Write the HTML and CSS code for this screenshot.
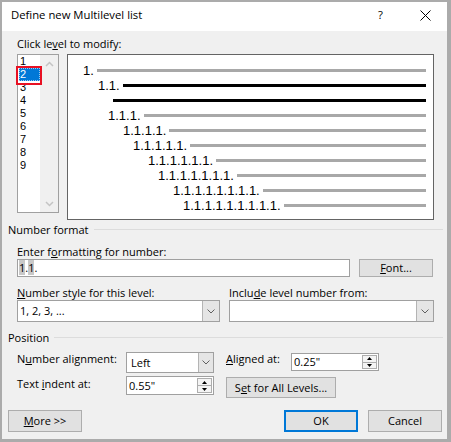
FILE: index.html
```html
<!DOCTYPE html>
<html>
<head>
<meta charset="utf-8">
<link rel="stylesheet" href="styles.css">
</head>
<body>
<div class="window">
  <div class="titlebar">
    <span class="title">Define new Multilevel list</span>
    <span class="help">?</span>
    <svg class="close" width="11" height="11" viewBox="0 0 11 11"><path d="M0.5 0.5 L10.5 10.5 M10.5 0.5 L0.5 10.5" stroke="#000" stroke-width="1" fill="none"/></svg>
  </div>
  <div class="content">
    <div class="indent label lbl-click">Click le<u>v</u>el to modify:</div>
    <div class="indent top-row">
      <div class="levels">
        <ul class="level-list">
          <li>1</li><li class="sel">2</li><li>3</li><li>4</li><li>5</li><li>6</li><li>7</li><li>8</li><li>9</li>
        </ul>
        <div class="vscroll">
          <svg class="chev-up" width="9" height="6" viewBox="0 0 9 6"><path d="M1 5 L4.5 1.5 L8 5" stroke="#c4c4c4" stroke-width="1.5" fill="none"/></svg>
          <svg class="chev-down" width="9" height="6" viewBox="0 0 9 6"><path d="M1 1 L4.5 4.5 L8 1" stroke="#c4c4c4" stroke-width="1.5" fill="none"/></svg>
        </div>
        <div class="annot"></div>
      </div>
      <div class="preview">
        <div class="prow r1"><span class="num">1.</span><span class="ln gray"></span></div>
        <div class="prow r2"><span class="num">1.1.</span><span class="ln black"></span></div>
        <div class="prow r3"><span class="ln black"></span></div>
        <div class="prow r4"><span class="num">1.1.1.</span><span class="ln gray"></span></div>
        <div class="prow r5"><span class="num">1.1.1.1.</span><span class="ln gray"></span></div>
        <div class="prow r6"><span class="num">1.1.1.1.1.</span><span class="ln gray"></span></div>
        <div class="prow r7"><span class="num">1.1.1.1.1.1.</span><span class="ln gray"></span></div>
        <div class="prow r8"><span class="num">1.1.1.1.1.1.1.</span><span class="ln gray"></span></div>
        <div class="prow r9"><span class="num">1.1.1.1.1.1.1.1.</span><span class="ln gray"></span></div>
        <div class="prow r10"><span class="num">1.1.1.1.1.1.1.1.1.</span><span class="ln gray"></span></div>
      </div>
    </div>

    <div class="group-head gh-number"><span>Number format</span><span class="rule"></span></div>
    <div class="indent">
      <div class="label lbl-enter">Enter f<u>o</u>rmatting for number:</div>
      <div class="fmt-row">
        <div class="textbox"><span class="fld">1</span>.<span class="fld">1</span>.</div>
        <div class="btn btn-font"><u>F</u>ont...</div>
      </div>
      <div class="style-grid">
        <div class="label"><u>N</u>umber style for this level:</div>
        <div class="label">Inclu<u>d</u>e level number from:</div>
        <div class="combo"><span class="val">1, 2, 3, ...</span><span class="drop"><svg width="8" height="5" viewBox="0 0 8 5"><path d="M0.5 0.5 L4 4 L7.5 0.5" stroke="#606060" stroke-width="1" fill="none"/></svg></span></div>
        <div class="combo"><span class="val"></span><span class="drop"><svg width="8" height="5" viewBox="0 0 8 5"><path d="M0.5 0.5 L4 4 L7.5 0.5" stroke="#606060" stroke-width="1" fill="none"/></svg></span></div>
      </div>
    </div>

    <div class="group-head gh-position"><span>Position</span><span class="rule"></span></div>
    <div class="indent pos-grid">
      <div class="label up1">N<u>u</u>mber alignment:</div>
      <div class="combo combo-left"><span class="val">Left</span><span class="drop"><svg width="8" height="5" viewBox="0 0 8 5"><path d="M0.5 0.5 L4 4 L7.5 0.5" stroke="#606060" stroke-width="1" fill="none"/></svg></span></div>
      <div class="label up1"><u>A</u>ligned at:</div>
      <div class="spin spin-aligned"><span class="val">0.25"</span>
        <span class="spin-btns">
          <span class="sb"><svg width="5" height="3" viewBox="0 0 5 3"><path d="M0 3 L2.5 0 L5 3 Z" fill="#000"/></svg></span>
          <span class="sb"><svg width="5" height="3" viewBox="0 0 5 3"><path d="M0 0 L2.5 3 L5 0 Z" fill="#000"/></svg></span>
        </span>
      </div>
      <div class="label">Text <u>i</u>ndent at:</div>
      <div class="spin spin-indent"><span class="val">0.55"</span>
        <span class="spin-btns">
          <span class="sb"><svg width="5" height="3" viewBox="0 0 5 3"><path d="M0 3 L2.5 0 L5 3 Z" fill="#000"/></svg></span>
          <span class="sb"><svg width="5" height="3" viewBox="0 0 5 3"><path d="M0 0 L2.5 3 L5 0 Z" fill="#000"/></svg></span>
        </span>
      </div>
      <div class="btn btn-setall">S<u>e</u>t for All Levels...</div>
    </div>

    <div class="bottom-row">
      <div class="btn btn-dlg"><u>M</u>ore &gt;&gt;</div>
      <div class="btn btn-dlg btn-ok">OK</div>
      <div class="btn btn-dlg btn-cancel">Cancel</div>
    </div>
  </div>
</div>
</body>
</html>
```

FILE: styles.css
```css
* { box-sizing: border-box; }
html, body { margin: 0; padding: 0; }
body {
  font-family: "Open Sans", "Noto Sans", "DejaVu Sans", sans-serif;
  font-size: 11px;
  line-height: 15px;
  color: #000;
  background: #fff;
}
u { text-decoration: underline; text-underline-offset: 1px; }

.window {
  width: 451px;
  height: 442px;
  border-style: solid;
  border-color: #ababab;
  border-width: 2px 4px 3px 2px;
  background: #f0f0f0;
  display: flex;
  flex-direction: column;
}

.titlebar {
  height: 29px;
  flex: none;
  background: #fff;
  display: flex;
  align-items: flex-start;
  padding: 5px 16px 0 9px;
  font-size: 11.3px;
}
.title { flex: 1; }
.help { width: 6px; }
.close { margin: 3px 0 0 36px; }

.content {
  flex: 1;
  display: flex;
  flex-direction: column;
  padding: 0 5px 0 6px;
}
.indent { padding: 0 8px 0 9px; }

.lbl-click { margin-top: 5px; }

.top-row {
  margin-top: 3px;
  display: flex;
  align-items: flex-start;
  gap: 8px;
}

.levels {
  position: relative;
  width: 42px;
  height: 159px;
  border: 1px solid #a0a0a0;
  background: #fff;
  display: flex;
}
.level-list {
  list-style: none;
  margin: 0;
  padding: 0;
  width: 22px;
  font-family: "Liberation Sans", Arial, sans-serif;
  font-size: 11px;
}
.level-list li {
  height: 13px;
  line-height: 13px;
  padding-left: 2px;
}
.level-list li.sel {
  margin-left: 1px;
  padding-left: 1px;
  background: #0078d7;
  color: #fff;
  outline: 1px dotted #9cc8f0;
  outline-offset: -1px;
}
.vscroll {
  width: 18px;
  background: #f0f0f0;
  display: flex;
  flex-direction: column;
  align-items: center;
  justify-content: space-between;
  padding: 6px 0 5px;
}
.annot {
  position: absolute;
  left: -2px;
  top: 11px;
  width: 26px;
  height: 19px;
  border: 2px solid #e81123;
}

.preview {
  width: 367px;
  height: 166px;
  border: 1px solid #646464;
  background: #fff;
  padding: 8px 7px 0 0;
  font-family: "Liberation Sans", Arial, sans-serif;
  font-size: 13px;
}
.prow {
  height: 15px;
  line-height: 15px;
  display: flex;
  align-items: center;
}
.num { white-space: nowrap; }
.ln { flex: 1; height: 3px; margin-left: 3px; }
.r3 .ln { margin-left: 0; }
.ln.gray { background: #a8a8a8; }
.ln.black { background: #000; }
.r1 { padding-left: 15px; }
.r2 { padding-left: 30px; }
.r3 { padding-left: 45px; }
.r4 { padding-left: 40px; }
.r5 { padding-left: 55px; }
.r6 { padding-left: 65px; }
.r7 { padding-left: 80px; }
.r8 { padding-left: 90px; }
.r9 { padding-left: 105px; }
.r10 { padding-left: 115px; }

.group-head {
  display: flex;
  align-items: center;
  margin-right: -1px;
}
.group-head .rule {
  flex: 1;
  height: 1px;
  background: #dcdcdc;
  margin-left: 5px;
}
.gh-number { margin-top: 2px; }
.gh-position { margin-top: 8px; }

.lbl-enter { margin-top: 7px; }

.fmt-row {
  display: flex;
  gap: 9px;
}
.textbox {
  width: 333px;
  height: 18px;
  border: 1px solid #a0a0a0;
  background: #fff;
  padding-left: 1px;
  line-height: 16px;
}
.fld { background: #c8c8c8; }

.btn {
  background: #e1e1e1;
  border: 1px solid #adadad;
  text-align: center;
  white-space: nowrap;
}
.btn-font { width: 74px; height: 18px; line-height: 16px; }

.style-grid {
  margin-top: 8px;
  display: grid;
  grid-template-columns: 203px 205px;
  column-gap: 9px;
}

.combo {
  height: 22px;
  border: 1px solid #a0a0a0;
  background: #fff;
  display: flex;
}
.combo .val {
  flex: 1;
  padding-left: 2px;
  line-height: 20px;
}
.combo .drop {
  width: 17px;
  background: #e5e5e5;
  border-left: 1px solid #b4b4b4;
  display: flex;
  align-items: center;
  justify-content: center;
}

.pos-grid {
  margin-top: 7px;
  display: grid;
  grid-template-columns: 109px 100px 65px 88px;
  grid-template-rows: 21px 22px;
  row-gap: 3px;
  align-items: start;
}
.up1 { margin-top: -1px; }
.combo-left { width: 88px; height: 21px; }
.combo-left .val { line-height: 19px; padding-left: 4px; }
.combo-left .drop { width: 15px; }

.spin {
  width: 88px;
  border: 1px solid #a0a0a0;
  background: #fff;
  display: flex;
}
.spin .val { flex: 1; padding-left: 2px; }
.spin-aligned { height: 18px; margin-top: 1px; }
.spin-aligned .val { line-height: 16px; }
.spin-indent { height: 19px; }
.spin-indent .val { line-height: 17px; }
.spin-btns {
  width: 16px;
  display: flex;
  flex-direction: column;
  padding: 1px 1px 1px 0;
}
.sb {
  flex: 1;
  border: 1px solid #adadad;
  background: #f4f4f4;
  display: flex;
  align-items: center;
  justify-content: center;
}
.sb + .sb { border-top: none; }

.btn-setall {
  grid-column: 3 / span 2;
  width: 110px;
  height: 21px;
  line-height: 19px;
  margin-top: 1px;
}

.bottom-row {
  margin-top: 12px;
  display: flex;
}
.btn-dlg { width: 74px; height: 22px; line-height: 20px; }
.btn-ok { margin-left: auto; border: 2px solid #0078d7; line-height: 18px; }
.btn-cancel { margin-left: 10px; }
```
